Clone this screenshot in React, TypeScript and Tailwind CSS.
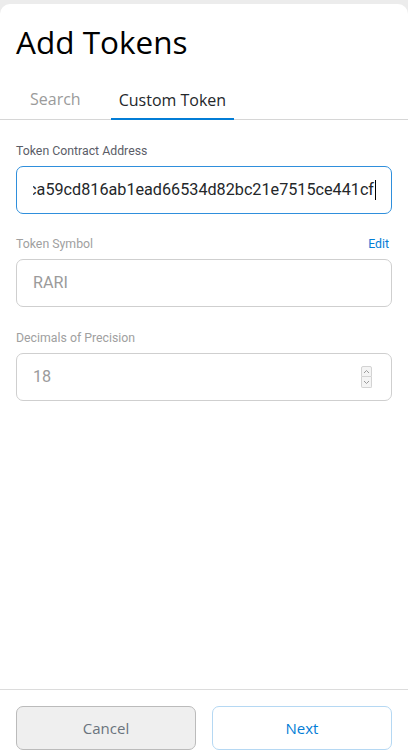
import React from "react";

const geo = { fontFamily: "'Open Sans', Lato, sans-serif" };
const rob = { fontFamily: "Roboto, 'Liberation Sans', sans-serif" };

export default function App() {
  return (
    <div className="w-[408px] h-[755px] bg-[#ececec] pt-[4px] overflow-hidden">
      <div className="h-[751px] bg-white rounded-t-[10px] flex flex-col">
        <div className="pt-[20px] px-4">
          <h1 className="text-[31.5px] leading-[36px] text-black" style={geo}>
            Add Tokens
          </h1>
        </div>
        <div className="mt-[28px] flex items-end border-b border-[#d6d6d6] pl-[30px]" style={geo}>
          <div className="text-[16px] leading-[22px] text-[#9b9b9b] pb-[9px]">Search</div>
          <div className="ml-[30px] px-2 text-[16px] leading-[22px] text-[#24272a] pb-[7px] border-b-2 border-[#037dd6] mb-[-1px]">
            Custom Token
          </div>
        </div>
        <div className="px-4 flex flex-col" style={rob}>
          <div className="mt-[23px] text-[12.3px] leading-[16px] text-[#5b5d67]">Token Contract Address</div>
          <div className="mt-[7px] h-[48px] rounded-[7px] border border-[#2f8fdc] pl-4 pr-[15px] flex items-center">
            <div className="flex-1 flex items-center justify-end overflow-hidden whitespace-nowrap">
              <span className="text-[16.2px] text-[#24272a]">0xfca59cd816ab1ead66534d82bc21e7515ce441cf</span>
              <span className="inline-block w-[1px] h-[20px] bg-black ml-[1px] shrink-0"></span>
            </div>
          </div>

          <div className="mt-[22px] flex justify-between items-center text-[12.3px] leading-[16px]">
            <span className="text-[#a0a0a0]">Token Symbol</span>
            <span className="text-[#037dd6] mr-[3px]">Edit</span>
          </div>
          <div className="mt-[7px] h-[48px] rounded-[7px] border border-[#cfcfcf] px-4 flex items-center">
            <span className="text-[16.2px] text-[#9b9b9b]">RARI</span>
          </div>

          <div className="mt-[23px] text-[12.3px] leading-[16px] text-[#a0a0a0]">Decimals of Precision</div>
          <div className="mt-[7px] h-[48px] rounded-[7px] border border-[#cfcfcf] pl-4 pr-[19px] flex items-center justify-between">
            <span className="text-[16.2px] text-[#9b9b9b]">18</span>
            <div className="flex flex-col w-[11px]">
              <div className="h-[11px] border border-[#d3d3d3] rounded-t-[2px] bg-[#f4f4f4] flex items-center justify-center">
                <svg width="7" height="5" viewBox="0 0 7 5"><path d="M1 4 L3.5 1.5 L6 4" fill="none" stroke="#9a9a9a" strokeWidth="1" /></svg>
              </div>
              <div className="h-[11px] border border-t-0 border-[#d3d3d3] rounded-b-[2px] bg-[#f4f4f4] flex items-center justify-center">
                <svg width="7" height="5" viewBox="0 0 7 5"><path d="M1 1 L3.5 3.5 L6 1" fill="none" stroke="#9a9a9a" strokeWidth="1" /></svg>
              </div>
            </div>
          </div>
        </div>
        <div className="flex-1"></div>
        <div className="border-t border-[#dcdcdc] px-4 pt-4 pb-[5px] flex gap-4" style={geo}>
          <button className="flex-1 h-[44px] rounded-[7px] border border-[#bbbbbb] bg-[#efefef] text-[15px] text-[#6a737d]">
            Cancel
          </button>
          <button className="flex-1 h-[44px] rounded-[7px] border border-[#b5d8f3] bg-white text-[15px] text-[#037dd6]">
            Next
          </button>
        </div>
      </div>
    </div>
  );
}
